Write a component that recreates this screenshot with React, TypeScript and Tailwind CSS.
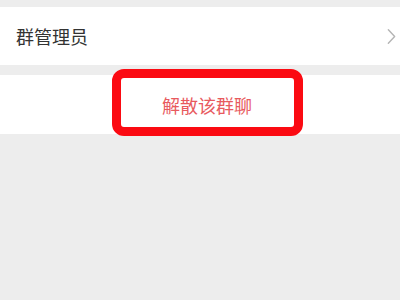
export default function App() {
  const font = { fontFamily: '"Noto Sans CJK SC", "Noto Sans", sans-serif' };
  return (
    <div className="h-[300px] w-[400px] overflow-hidden bg-[#ededed] pt-[7px]" style={font}>
      {/* Admin row */}
      <div className="flex h-[58px] items-center justify-between bg-white pl-4 pr-[4px]">
        <span className="text-[18px] leading-none text-[#333333]">群管理员</span>
        <svg viewBox="0 0 10 18" className="h-[17px] w-[9px]" fill="none" stroke="#b5b5b5" strokeWidth="1.6" strokeLinecap="round" strokeLinejoin="round">
          <path d="M1.5 1.5 8.5 9l-7 7.5" />
        </svg>
      </div>

      {/* Dissolve row */}
      <div className="relative mt-[10px] flex h-[59px] items-center justify-center bg-white">
        <span className="ml-[14px] text-[18px] leading-none text-[#e85a5e]">解散该群聊</span>
        {/* annotation box */}
        <div className="absolute left-[112px] top-[-6px] h-[67px] w-[191px] rounded-[12px] border-[9px] border-[#fb0a12]" />
      </div>
    </div>
  );
}
